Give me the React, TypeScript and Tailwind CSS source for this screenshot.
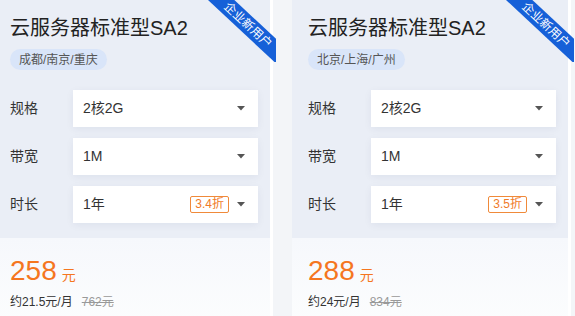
import React from "react";

type Card = {
  region: string;
  discount: string;
  price: string;
  monthly: string;
  original: string;
};

const cards: Card[] = [
  { region: "成都/南京/重庆", discount: "3.4折", price: "258", monthly: "约21.5元/月", original: "762元" },
  { region: "北京/上海/广州", discount: "3.5折", price: "288", monthly: "约24元/月", original: "834元" },
];

const font = { fontFamily: '"Liberation Sans", "Noto Sans CJK SC", sans-serif' };

function Caret() {
  return (
    <svg width="8" height="5" viewBox="0 0 8 5" className="shrink-0">
      <path d="M0 0 L8 0 L4 4.5 Z" fill="#555" />
    </svg>
  );
}

function Row({ label, value, badge }: { label: string; value: string; badge?: string }) {
  return (
    <div className="flex items-center h-[37px]">
      <div className="w-[63px] text-[14px] text-[#333]">{label}</div>
      <div className="flex-1 h-[37px] bg-white flex items-center pl-[10px] pr-[13px] shadow-[0_2px_8px_rgba(0,30,80,0.06)]">
        <span className="text-[14px] text-[#333] flex-1">{value}</span>
        {badge && (
          <span className="text-[12px] leading-[15px] text-[#f07a28] border border-[#f08a3a] rounded-[2px] px-[4px] mr-[8px]">
            {badge}
          </span>
        )}
        <Caret />
      </div>
    </div>
  );
}

function ProductCard({ c }: { c: Card }) {
  return (
    <div className="relative w-[279px] shrink-0 flex flex-col bg-[#eaeef6] border-r-[3px] border-white">
      <div className="absolute top-0 right-[-6px] w-[70px] h-[62px] overflow-hidden">
        <div className="absolute left-[-18px] top-[16px] w-[120px] h-[18px] bg-[#1660d8] rotate-[43deg] flex items-center justify-center text-white text-[12px] leading-none">
          企业新用户
        </div>
      </div>
      <div className="pl-[16px] pr-[12px] pt-[13px]">
        <div className="text-[20px] leading-[30px] text-[#222]">云服务器标准型SA2</div>
        <div className="mt-[6px] inline-flex items-center h-[21px] px-[9px] rounded-full bg-[#d9e5f9] text-[12px] text-[#555]">
          {c.region}
        </div>
        <div className="mt-[19px] flex flex-col gap-[11px] pb-[15px]">
          <Row label="规格" value="2核2G" />
          <Row label="带宽" value="1M" />
          <Row label="时长" value="1年" badge={c.discount} />
        </div>
      </div>
      <div className="flex-1 pl-[16px] pt-[17px] pb-[20px] bg-gradient-to-b from-[#f6f8fc] to-[#fdfefe]">
        <div className="flex items-baseline leading-[32px]">
          <span className="text-[28px] text-[#f5761f]">{c.price}</span>
          <span className="text-[14px] text-[#f5761f] ml-[5px]">元</span>
        </div>
        <div className="mt-[2px] flex items-center text-[12px] leading-[18px]">
          <span className="text-[#333]">{c.monthly}</span>
          <span className="ml-[9px] text-[#999] line-through">{c.original}</span>
        </div>
      </div>
    </div>
  );
}

export default function App() {
  return (
    <div className="w-[575px] h-[316px] overflow-hidden bg-[#f3f5f8]" style={font}>
      <div className="flex gap-[19px] ml-[-6px] h-[340px]">
        {cards.map((c, i) => (
          <ProductCard key={i} c={c} />
        ))}
      </div>
    </div>
  );
}
